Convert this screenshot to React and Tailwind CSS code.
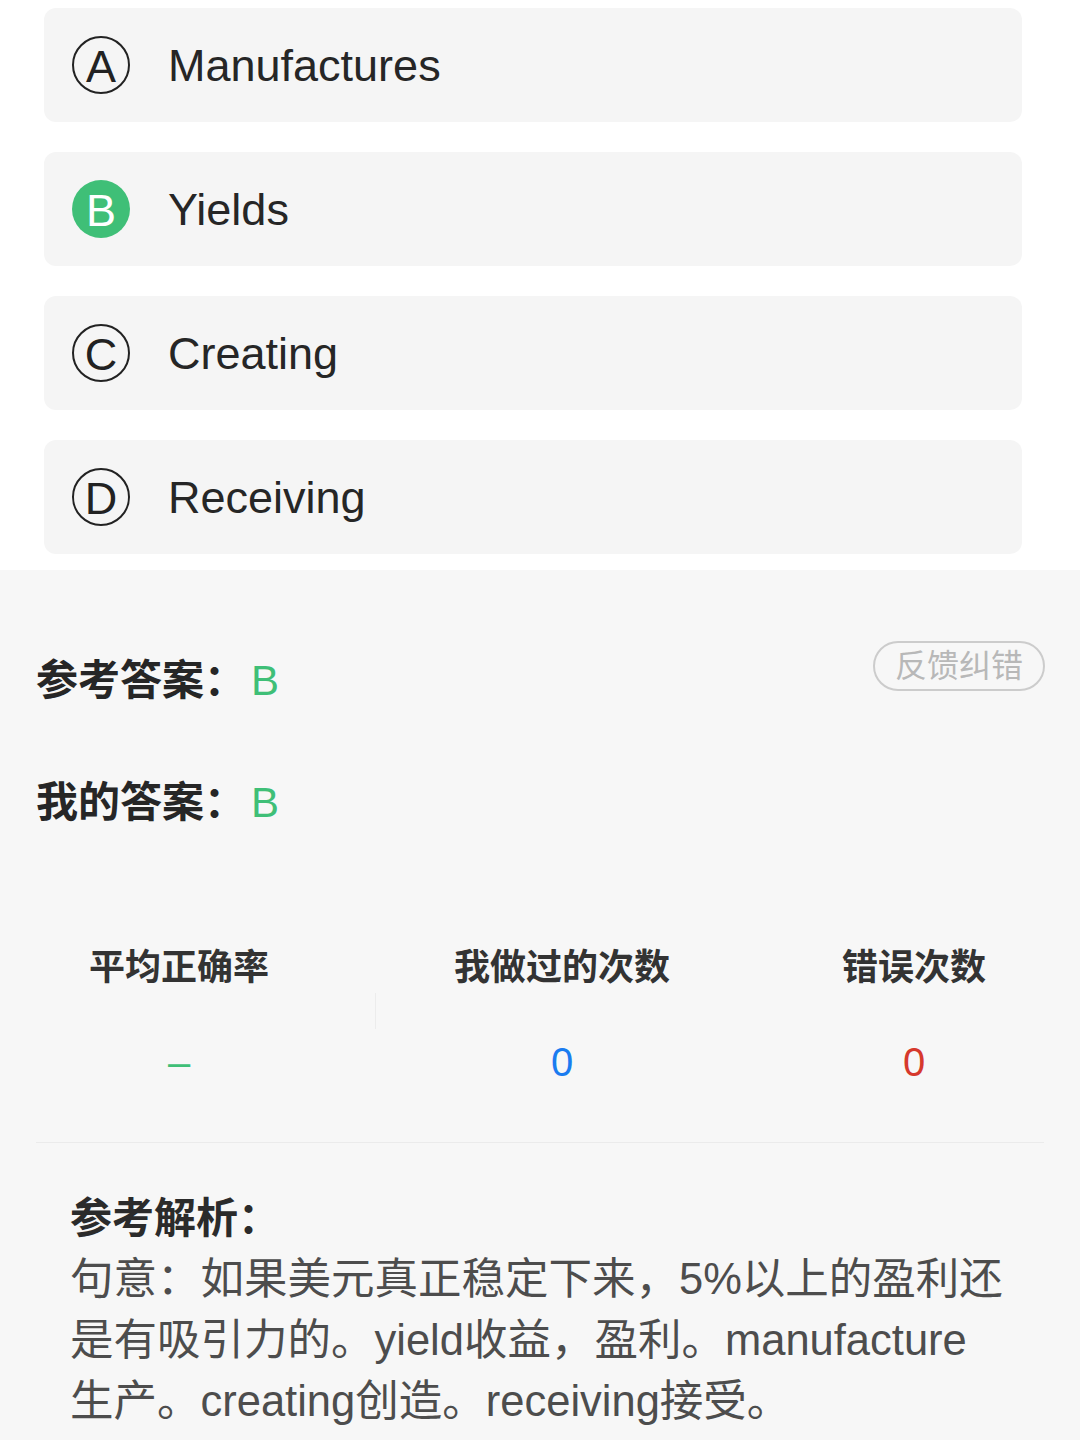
const OPTIONS = [
  { key: 'A', text: 'Manufactures' },
  { key: 'B', text: 'Yields', correct: true },
  { key: 'C', text: 'Creating' },
  { key: 'D', text: 'Receiving' },
]

const latin = { fontFamily: '"Liberation Sans", "Noto Sans CJK SC", sans-serif' }

function OptionBadge({ letter, correct }) {
  if (correct) {
    return (
      <span className="flex h-[58px] w-[58px] shrink-0 items-center justify-center rounded-full bg-[#3fbf77] pt-[2px] text-[45px] leading-none text-white">
        {letter}
      </span>
    )
  }
  return (
    <span className="flex h-[58px] w-[58px] shrink-0 items-center justify-center rounded-full border-2 border-[#222] pt-[2px] text-[45px] leading-none text-[#222]">
      {letter}
    </span>
  )
}

function Stat({ label, value, color, width }) {
  return (
    <div className={`flex flex-col items-center ${width}`}>
      <div className="h-[50px] text-[36px] font-bold leading-[50px] text-[#333]">{label}</div>
      <div className="h-[44px]" />
      <div className={`h-[50px] text-[40px] leading-[50px] ${color}`} style={latin}>
        {value}
      </div>
    </div>
  )
}

export default function App() {
  return (
    <div className="flex h-[1440px] w-[1080px] flex-col overflow-hidden bg-white" style={latin}>
      {/* 选项 */}
      <div className="flex flex-col gap-[30px] pb-[16px] pl-[44px] pr-[58px] pt-[8px]">
        {OPTIONS.map((o) => (
          <div key={o.key} className="flex h-[114px] items-center gap-[38px] rounded-[12px] bg-[#f5f5f5] pl-[28px]">
            <OptionBadge letter={o.key} correct={o.correct} />
            <span className="text-[45px] leading-none text-[#262626]">{o.text}</span>
          </div>
        ))}
      </div>

      <div className="flex-1 bg-[#f7f7f7]">
        <div className="flex items-start justify-between pl-[36px] pr-[35px] pt-[60px]">
          <div className="flex h-[100px] items-center text-[42px] font-bold text-[#262626]">
            参考答案：<span className="ml-[5px] font-normal text-[#3fbf77]">B</span>
          </div>
          <button
            type="button"
            className="mt-[11px] flex h-[50px] w-[172px] items-center justify-center rounded-full border-2 border-[#cccccc] text-[32px] text-[#b8b8b8]"
          >
            反馈纠错
          </button>
        </div>
        <div className="mt-[22px] flex h-[100px] items-center pl-[36px] text-[42px] font-bold text-[#262626]">
          我的答案：<span className="ml-[5px] font-normal text-[#3fbf77]">B</span>
        </div>

        {/* 统计 */}
        <div className="mt-[91px] flex">
          <Stat label="平均正确率" value="–" color="text-[#3fbf77]" width="w-[358px]" />
          <div className="ml-[17px] mt-[50px] h-[36px] w-px bg-[#ececec]" />
          <Stat label="我做过的次数" value="0" color="text-[#1a7cf0]" width="w-[372px]" />
          <Stat label="错误次数" value="0" color="text-[#d6392c]" width="w-[332px]" />
        </div>

        <div className="mx-[36px] mt-[55px] border-t border-[#ebebeb]" />

        {/* 解析 */}
        <div className="px-[70px] pt-[45px]">
          <div className="text-[42px] font-bold leading-[61px] text-[#2b2b2b]">参考解析：</div>
          <p className="whitespace-nowrap text-[43.5px] leading-[61px] text-[#4d4d4d]">
            句意：如果美元真正稳定下来，5%以上的盈利还
            <br />
            是有吸引力的。yield收益，盈利。manufacture
            <br />
            生产。creating创造。receiving接受。
          </p>
        </div>
      </div>
    </div>
  )
}
